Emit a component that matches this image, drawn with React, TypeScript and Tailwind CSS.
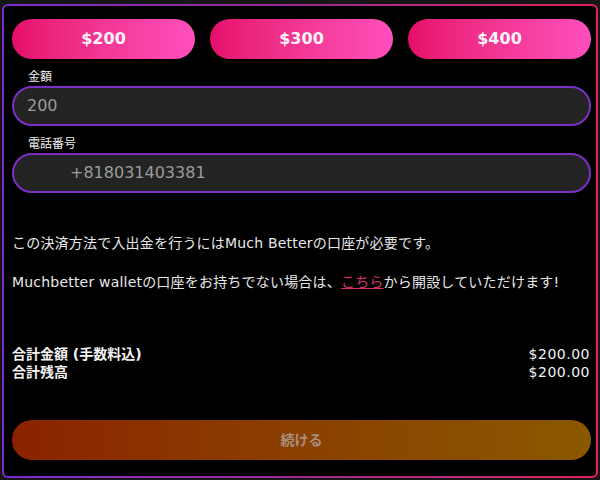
const font = { fontFamily: '"DejaVu Sans", "Noto Sans CJK JP", sans-serif' };

function AmountButton({ label }: { label: string }) {
  return (
    <button className="h-10 flex-1 rounded-full bg-gradient-to-r from-[#e60c6b] to-[#ff4fbd] text-[16px] font-bold text-[#fff4fa]">
      {label}
    </button>
  );
}

function Field({ label, value, indent }: { label: string; value: string; indent?: boolean }) {
  return (
    <div>
      <div className="mt-[10px] mb-px h-4 pl-4 text-[12px] leading-4 text-[#f0f0f0]">{label}</div>
      <div className="flex h-10 items-center rounded-full border-2 border-[#7b2fc4] bg-[#232323] text-[16px] text-[#9c9c9c]">
        <span className={indent ? "pl-[56px]" : "pl-[13px]"}>{value}</span>
      </div>
    </div>
  );
}

export default function App() {
  return (
    <div className="h-[480px] w-[600px] bg-[#161616] px-[2px] pt-1 pb-[2px]" style={font}>
      <div className="h-full rounded-md bg-gradient-to-r from-[#7a2bd0] via-[#a02890] to-[#e0205a] p-[2px]">
        <div className="flex h-full flex-col rounded bg-black pt-[13px] pl-2 pr-[5px]">
          <div className="flex gap-[15px]">
            <AmountButton label="$200" />
            <AmountButton label="$300" />
            <AmountButton label="$400" />
          </div>

          <Field label="金額" value="200" />
          <Field label="電話番号" value="+818031403381" indent />

          <p className="mt-10 text-[14px] leading-5 tracking-[0.2px] text-[#e8e8e8]">
            この決済方法で入出金を行うにはMuch Betterの口座が必要です。
          </p>
          <p className="mt-[19px] text-[14px] leading-5 tracking-[0.2px] text-[#e8e8e8]">
            Muchbetter walletの口座をお持ちでない場合は、
            <a className="text-[#d5326c] underline">こちら</a>
            から開設していただけます!
          </p>

          <div className="mt-[53px] text-[14px] leading-[18px] font-bold text-[#f2f2f2]">
            <div className="flex justify-between pr-[1px]">
              <span>合計金額 (手数料込)</span>
              <span className="font-normal tracking-[0.5px]">$200.00</span>
            </div>
            <div className="flex justify-between pr-[1px]">
              <span>合計残高</span>
              <span className="font-normal tracking-[0.5px]">$200.00</span>
            </div>
          </div>

          <button className="mt-[39px] h-10 w-full rounded-full bg-gradient-to-r from-[#8a2200] to-[#8a5800] text-[14px] font-bold text-[#a89080]">
            続ける
          </button>
        </div>
      </div>
    </div>
  );
}
